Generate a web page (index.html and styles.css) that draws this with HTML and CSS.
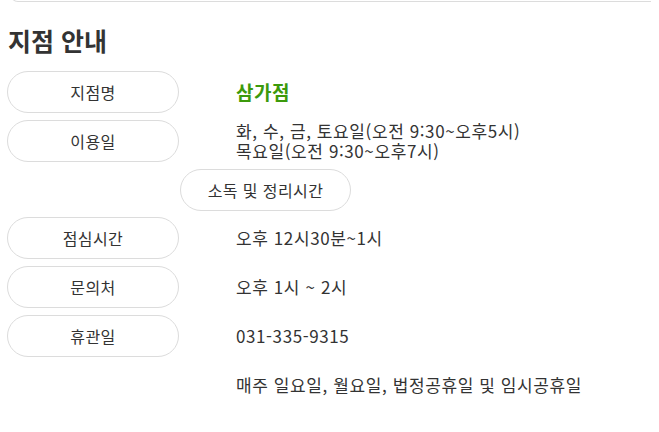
FILE: index.html
```html
<!DOCTYPE html>
<html lang="ko">
<head>
<meta charset="utf-8">
<link rel="stylesheet" href="styles.css">
</head>
<body>
<div class="topbox"></div>
<h2 class="title">지점 안내</h2>
<div class="list">
  <div class="row">
    <div class="pill">지점명</div>
    <div class="value name">삼가점</div>
  </div>
  <div class="row">
    <div class="pill">이용일</div>
    <div class="value two">화, 수, 금, 토요일(오전 9:30~오후5시)<br>목요일(오전 9:30~오후7시)</div>
  </div>
  <div class="row">
    <div class="pill shifted">소독 및 정리시간</div>
  </div>
  <div class="row">
    <div class="pill">점심시간</div>
    <div class="value">오후 12시30분~1시</div>
  </div>
  <div class="row">
    <div class="pill">문의처</div>
    <div class="value">오후 1시 ~ 2시</div>
  </div>
  <div class="row">
    <div class="pill">휴관일</div>
    <div class="value">031-335-9315</div>
  </div>
  <div class="row">
    <div class="spacer"></div>
    <div class="value">매주 일요일, 월요일, 법정공휴일 및 임시공휴일</div>
  </div>
</div>
</body>
</html>
```
FILE: styles.css
```css
html, body {
  margin: 0;
  padding: 0;
  background: #fff;
}
body {
  font-family: "Noto Sans CJK KR", "Noto Sans", sans-serif;
  color: #333;
  width: 659px;
  overflow: hidden;
}
.topbox {
  margin: -40px 0 0 10px;
  height: 40px;
  border: 1px solid #dcdcdc;
  border-radius: 8px;
  width: 640px;
  border-right: none;
  border-top-right-radius: 0;
  border-bottom-right-radius: 0;
}
.title {
  margin: 20px 0 0 8px;
  font-size: 25px;
  font-weight: 700;
  line-height: 36px;
}
.list {
  margin-top: 13px;
  display: flex;
  flex-direction: column;
  gap: 6.8px;
  padding-left: 7px;
}
.row {
  display: flex;
  align-items: center;
  height: 42px;
}
.pill, .spacer {
  box-sizing: border-box;
  width: 172px;
  height: 42px;
  flex: none;
}
.pill {
  border: 1px solid #dcdcdc;
  border-radius: 21px;
  display: flex;
  align-items: center;
  justify-content: center;
  font-size: 16px;
  letter-spacing: 0.4px;
}
.pill.shifted {
  margin-left: 173px;
  width: 171px;
}
.value {
  margin-left: 57px;
  font-size: 17px;
  line-height: 20px;
  letter-spacing: 0.6px;
  white-space: nowrap;
}
.value.name {
  color: #3c9a0c;
  font-weight: 700;
  font-size: 19px;
  letter-spacing: 0.5px;
}
```
